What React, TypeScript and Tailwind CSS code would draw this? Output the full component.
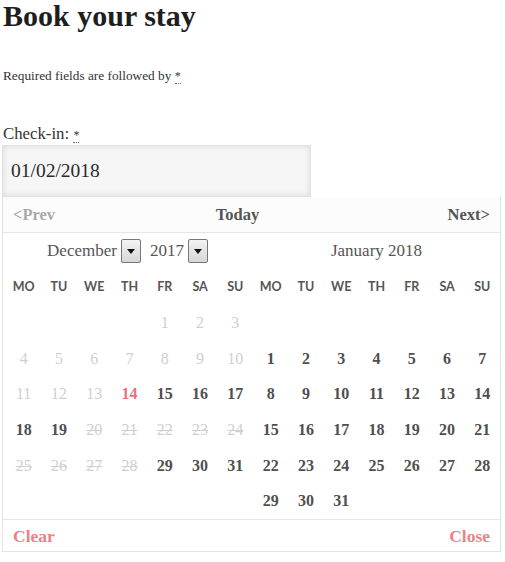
import React from "react";

type Cell = { n: number | null; s: "past" | "blocked" | "today" | "avail" | "none" };

const serif = "font-['Liberation_Serif','DejaVu_Serif',serif]";

function decCells(): Cell[] {
  const cells: Cell[] = [];
  for (let i = 0; i < 4; i++) cells.push({ n: null, s: "none" });
  for (let d = 1; d <= 31; d++) {
    let s: Cell["s"] = "avail";
    if (d < 14) s = "past";
    else if (d === 14) s = "today";
    else if (d >= 20 && d <= 28) s = "blocked";
    cells.push({ n: d, s });
  }
  return cells;
}

function janCells(): Cell[] {
  const cells: Cell[] = [];
  for (let i = 0; i < 7; i++) cells.push({ n: null, s: "none" });
  for (let d = 1; d <= 31; d++) cells.push({ n: d, s: "avail" });
  return cells;
}

const days = ["MO", "TU", "WE", "TH", "FR", "SA", "SU"];

function DayCell({ c }: { c: Cell }) {
  let cls = "";
  if (c.s === "past") cls = "text-[#cfcfcf] font-normal";
  else if (c.s === "blocked") cls = "text-[#cfcfcf] font-normal line-through";
  else if (c.s === "today") cls = "text-[#e8717d] font-bold";
  else if (c.s === "avail") cls = "text-[#4f4f4f] font-bold";
  return (
    <div className={`h-[35.7px] flex items-center justify-center text-[16px] ${cls}`}>
      {c.n ?? ""}
    </div>
  );
}

function DropBtn() {
  return (
    <span className="inline-flex w-[20px] h-[24px] items-center justify-center border border-[#777] bg-gradient-to-b from-[#f4f4f4] to-[#d6d6d6] rounded-[2px]">
      <svg width="8" height="5" viewBox="0 0 8 5">
        <path d="M0 0 H8 L4 5 Z" fill="#111" />
      </svg>
    </span>
  );
}

function Month({ title, cells }: { title: React.ReactNode; cells: Cell[] }) {
  return (
    <div className="w-[247px]">
      <div className="h-[36px] flex items-center justify-center text-[17px] text-[#555]">{title}</div>
      <div className="grid grid-cols-7">
        {days.map((d) => (
          <div
            key={d}
            className="h-[36px] flex items-center justify-center text-[12.5px] font-bold text-[#555] font-['Lato','Open_Sans',sans-serif]"
          >
            {d}
          </div>
        ))}
      </div>
      <div className="grid grid-cols-7">
        {cells.map((c, i) => (
          <DayCell key={i} c={c} />
        ))}
      </div>
    </div>
  );
}

export default function App() {
  return (
    <div className={`w-[505px] h-[562px] bg-white overflow-hidden ${serif}`}>
      <h1 className="pl-[3px] pt-[1px] text-[30px] leading-[30px] font-bold text-[#1e1e1e] font-['Liberation_Serif','DejaVu_Serif',serif]">
        Book your stay
      </h1>
      <p className="pl-[3px] mt-[38px] text-[13.3px] leading-[14px] text-[#333]">
        Required fields are followed by{" "}
        <abbr className="no-underline border-b border-dotted border-[#666] text-[12px]" title="required">
          *
        </abbr>
      </p>
      <div className="pl-[3px] mt-[42px] text-[16.8px] leading-[18px] text-[#333]">
        Check-in:{" "}
        <abbr className="no-underline border-b border-dotted border-[#666] text-[12px]" title="required">
          *
        </abbr>
      </div>
      <div className="ml-[2px] mt-[1px] w-[309px] h-[52px] border border-[#e2e2e2] bg-[#f6f6f6] shadow-[inset_0_0_6px_rgba(0,0,0,0.12)] flex items-center pl-[8px] text-[19.5px] text-[#2a2a2a]">
        01/02/2018
      </div>
      <div className="ml-[2px] w-[499px] h-[355px] border border-[#e3e3e3] border-t-0 overflow-hidden">
        <div className="h-[36px] pt-[2px] bg-[#fcfcfc] border-b border-[#e6e6e6] grid grid-cols-[1fr_auto_1fr] items-center px-[10px] text-[16.5px]">
          <span className="text-[#aaa] font-bold">&lt;Prev</span>
          <span className="text-[#555] font-bold mr-[28px]">Today</span>
          <span className="text-[#555] font-bold text-right">Next&gt;</span>
        </div>
        <div className="flex pl-[3px]">
          <Month
            title={
              <span className="flex items-center gap-[4px] ml-[-4px]">
                <span>December</span>
                <DropBtn />
                <span className="ml-[5px]">2017</span>
                <DropBtn />
              </span>
            }
            cells={decCells()}
          />
          <Month title={<span>January 2018</span>} cells={janCells()} />
        </div>
        <div className="border-t border-[#e6e6e6] h-[33px] flex items-center justify-between px-[10px] text-[17.5px] font-bold text-[#ef7f86]">
          <span>Clear</span>
          <span>Close</span>
        </div>
      </div>
    </div>
  );
}
